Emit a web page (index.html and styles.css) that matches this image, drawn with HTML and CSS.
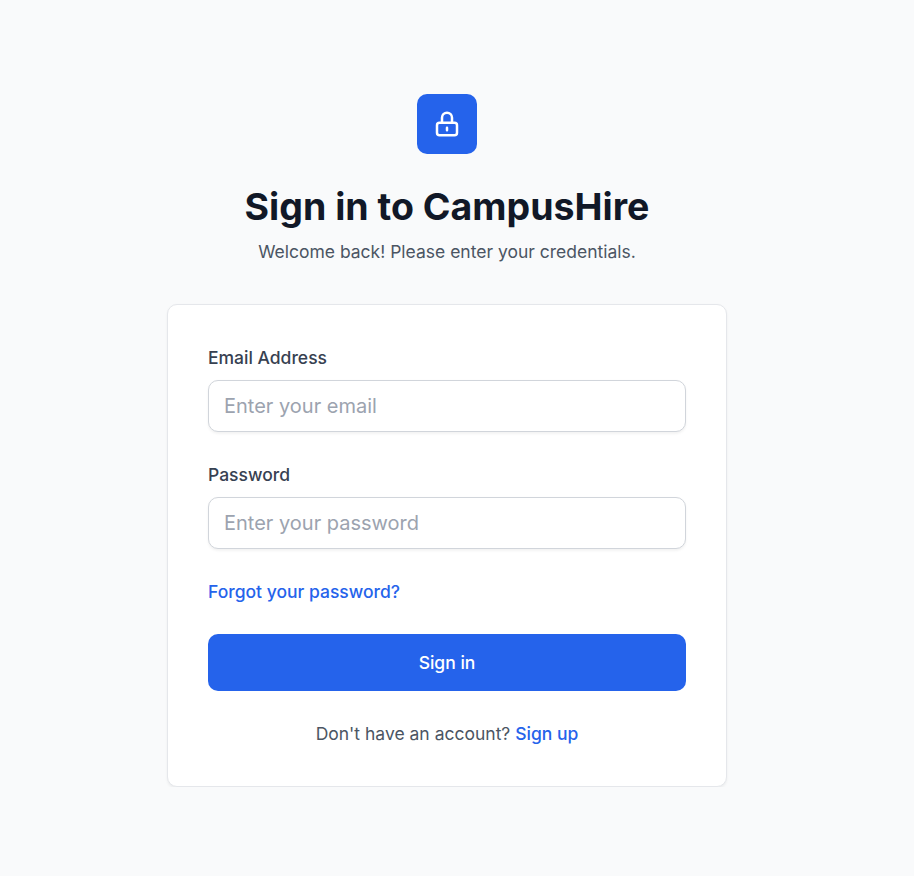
FILE: index.html
```html
<!DOCTYPE html>
<html lang="en">
<head>
<meta charset="utf-8">
<title>Sign in to CampusHire</title>
<link rel="stylesheet" href="styles.css">
</head>
<body>
<main class="page">
  <header class="intro">
    <div class="logo">
      <svg class="logo-icon" viewBox="0 0 24 24" fill="none" stroke="currentColor" stroke-width="2" stroke-linecap="round" stroke-linejoin="round" aria-hidden="true">
        <path d="M12 15v2m-6 4h12a2 2 0 002-2v-6a2 2 0 00-2-2H6a2 2 0 00-2 2v6a2 2 0 002 2zm10-10V7a4 4 0 00-8 0v4h8z"/>
      </svg>
    </div>
    <h1 class="title">Sign in to CampusHire</h1>
    <p class="subtitle">Welcome back! Please enter your credentials.</p>
  </header>
  <form class="card">
    <div class="field">
      <label class="label" for="email">Email Address</label>
      <input class="input" id="email" type="email" placeholder="Enter your email">
    </div>
    <div class="field">
      <label class="label" for="password">Password</label>
      <input class="input" id="password" type="password" placeholder="Enter your password">
    </div>
    <a class="link forgot" href="#">Forgot your password?</a>
    <button class="submit" type="button">Sign in</button>
    <p class="signup">Don't have an account? <a class="link" href="#">Sign up</a></p>
  </form>
</main>
</body>
</html>
```

FILE: styles.css
```css
* { box-sizing: border-box; }
body {
  margin: 0;
  background: #f9fafb;
  font-family: Inter, sans-serif;
  font-size: 17.5px;
  line-height: 25px;
  color: #4b5563;
}
.page {
  width: 560px;
  margin-left: 167px;
  padding-top: 94px;
}
.intro { text-align: center; }
.logo {
  width: 60px;
  height: 60px;
  margin: 0 auto 30px;
  display: flex;
  align-items: center;
  justify-content: center;
  border-radius: 10px;
  background: #2563eb;
  color: #fff;
}
.logo-icon { width: 30px; height: 30px; }
.title {
  margin: 0 0 10px;
  font-size: 37.5px;
  line-height: 45px;
  font-weight: 700;
  color: #111827;
}
.subtitle { margin: 0; }
.card {
  margin-top: 40px;
  padding: 40px;
  height: 483px;
  background: #fff;
  border: 1px solid #e5e7eb;
  border-radius: 10px;
  box-shadow: 0 1.25px 2.5px rgba(0, 0, 0, .05);
}
.field { margin-bottom: 30px; }
.label {
  display: block;
  margin-bottom: 10px;
  font-weight: 500;
  color: #374151;
}
.input {
  display: block;
  width: 100%;
  height: 52px;
  padding: 0 15px;
  border: 1px solid #d1d5db;
  border-radius: 10px;
  font: 400 20px/30px Inter, sans-serif;
  background: #fff;
  box-shadow: 0 1.25px 2.5px rgba(0, 0, 0, .05);
}
.input::placeholder { color: #9ca3af; opacity: 1; }
.link { color: #2563eb; font-weight: 500; text-decoration: none; }
.forgot { display: block; }
.submit {
  display: block;
  width: 100%;
  height: 57px;
  margin: 30px 0;
  border: 0;
  border-radius: 10px;
  background: #2563eb;
  color: #fff;
  font: 500 17.5px/25px Inter, sans-serif;
}
.signup { margin: 0; text-align: center; }
```
